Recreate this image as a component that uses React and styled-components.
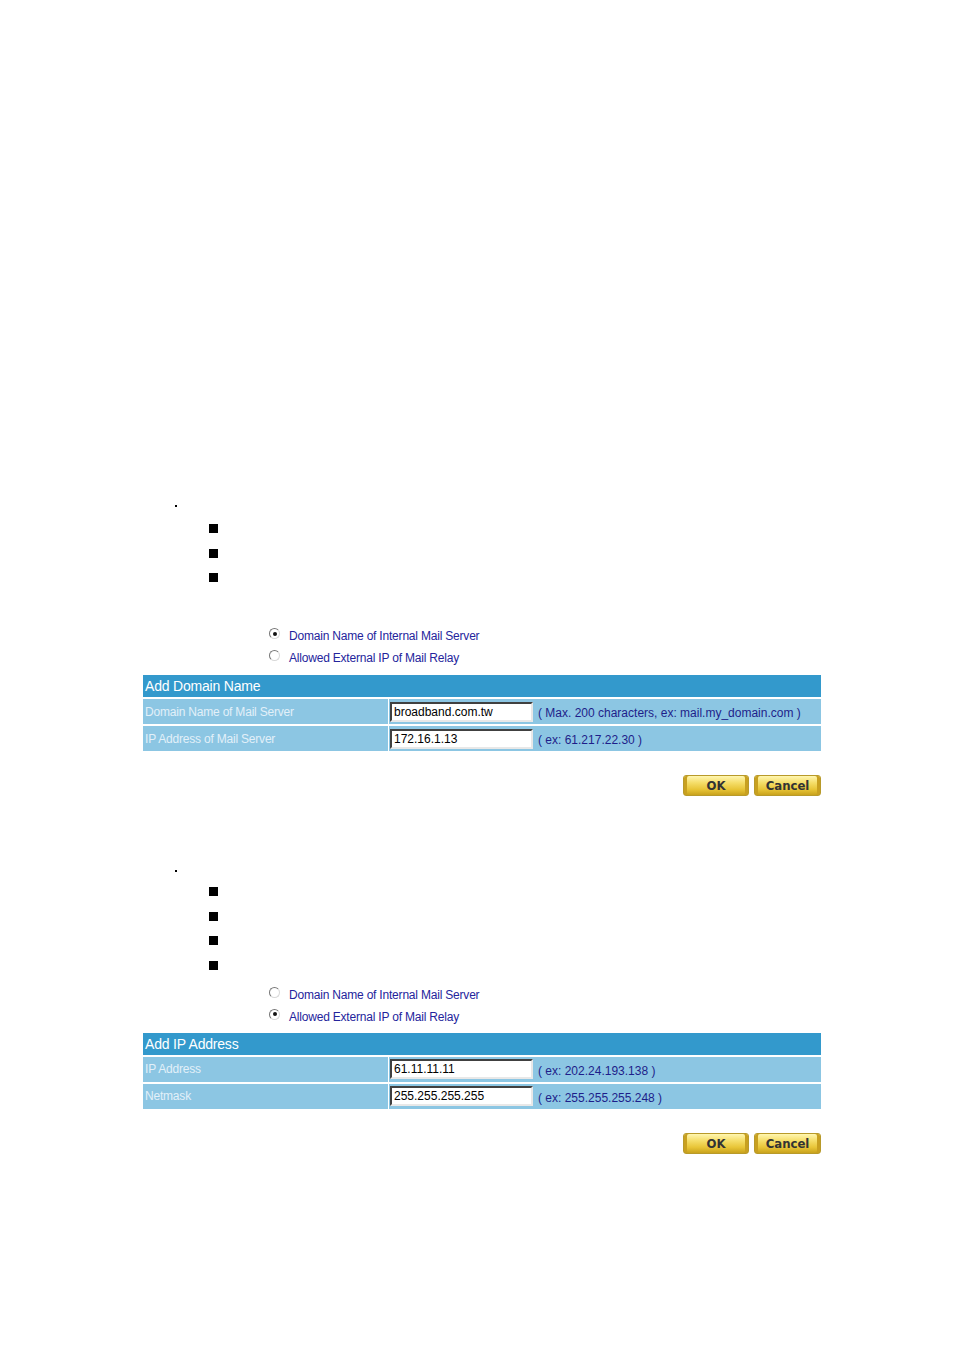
import styled, { createGlobalStyle } from 'styled-components';

const GlobalStyle = createGlobalStyle`
  html, body {
    margin: 0;
    padding: 0;
    background: #fff;
  }
  body {
    font-family: 'Liberation Sans', Arial, sans-serif;
  }
`;

const sections = [
  {
    bullets: 3,
    checked: 0,
    title: 'Add Domain Name',
    rows: [
      { label: 'Domain Name of Mail Server', value: 'broadband.com.tw', hint: '( Max. 200 characters, ex: mail.my_domain.com )' },
      { label: 'IP Address of Mail Server', value: '172.16.1.13', hint: '( ex: 61.217.22.30 )' },
    ],
  },
  {
    bullets: 4,
    checked: 1,
    title: 'Add IP Address',
    rows: [
      { label: 'IP Address', value: '61.11.11.11', hint: '( ex: 202.24.193.138 )' },
      { label: 'Netmask', value: '255.255.255.255', hint: '( ex: 255.255.255.248 )' },
    ],
  },
];

const App = () => {
  return (
    <>
      <GlobalStyle />
      <Page>
        {sections.map((s, i) => {
          const first = i === 0;
          return (
            <Section key={s.title} $first={first}>
              <Dot />
              <BulletList $first={first}>
                {Array.from({ length: s.bullets }).map((_, b) => (
                  <Square key={b} />
                ))}
              </BulletList>
              <RadioGroup $first={first}>
                <RadioRow>
                  <Radio $on={s.checked === 0} />
                  <RadioLabel>Domain Name of Internal Mail Server</RadioLabel>
                </RadioRow>
                <RadioRow>
                  <Radio $on={s.checked === 1} />
                  <RadioLabel>Allowed External IP of Mail Relay</RadioLabel>
                </RadioRow>
              </RadioGroup>
              <Table $first={first}>
                <Header>{s.title}</Header>
                {s.rows.map((r) => (
                  <Row key={r.label}>
                    <Label>{r.label}</Label>
                    <InputCell>
                      <Field defaultValue={r.value} />
                    </InputCell>
                    <Hint>{r.hint}</Hint>
                  </Row>
                ))}
              </Table>
              <Buttons>
                <GoldButton $w={66}>OK</GoldButton>
                <GoldButton $w={67}>Cancel</GoldButton>
              </Buttons>
            </Section>
          );
        })}
      </Page>
    </>
  );
};

export default App;

const Page = styled.div`
  width: 954px;
  height: 1350px;
  box-sizing: border-box;
  padding: 0 0 0 143px;
`;

const Section = styled.div`
  width: 678px;
  padding-top: ${(p) => (p.$first ? '505px' : '74px')};
`;

const Dot = styled.div`
  width: 2px;
  height: 2px;
  margin-left: 32px;
  background: #000;
`;

const BulletList = styled.div`
  display: flex;
  flex-direction: column;
  gap: 15.5px;
  margin: ${(p) => (p.$first ? '17px' : '15px')} 0 0 66px;
`;

const Square = styled.div`
  width: 9px;
  height: 9px;
  background: #000;
`;

const RadioGroup = styled.div`
  display: flex;
  flex-direction: column;
  gap: 10px;
  margin: ${(p) => (p.$first ? '48px' : '19px')} 0 0 126px;
`;

const RadioRow = styled.div`
  display: flex;
  align-items: center;
  height: 12px;
`;

const Radio = styled.span`
  position: relative;
  width: 9px;
  height: 9px;
  border-radius: 50%;
  border: 1px solid #777;
  border-right-color: #d8d8d8;
  border-bottom-color: #d8d8d8;
  background: #fff;
  margin-right: 9px;
  margin-top: -5px;
  &::after {
    content: '';
    display: ${(p) => (p.$on ? 'block' : 'none')};
    position: absolute;
    left: 2.5px;
    top: 2.5px;
    width: 4px;
    height: 4px;
    border-radius: 50%;
    background: #111;
  }
`;

const RadioLabel = styled.span`
  font-size: 12px;
  color: #24249c;
  letter-spacing: -0.2px;
`;

const Table = styled.div`
  margin-top: ${(p) => (p.$first ? '11px' : '10px')};
  display: flex;
  flex-direction: column;
`;

const Header = styled.div`
  height: 22px;
  line-height: 22px;
  background: #3399cc;
  color: #fff;
  font-size: 14px;
  letter-spacing: -0.2px;
  padding-left: 2px;
`;

const Row = styled.div`
  display: grid;
  grid-template-columns: 246px 147px 1fr;
  grid-template-rows: 25px;
  height: 25px;
  margin-top: 2px;
  overflow: hidden;
`;

const Cell = styled.div`
  background: #8cc6e3;
  display: flex;
  align-items: center;
  font-size: 12px;
  white-space: nowrap;
  overflow: hidden;
`;

const Label = styled(Cell)`
  color: #e2f0f9;
  padding-left: 2px;
  letter-spacing: -0.2px;
  border-right: 1px solid #fff;
`;

const InputCell = styled(Cell)`
  padding-left: 1px;
`;

const Field = styled.input`
  width: 143px;
  height: 20px;
  box-sizing: border-box;
  border: 2px solid #fff;
  border-top-color: #404040;
  border-left-color: #404040;
  border-right-color: #e8e8e8;
  border-bottom-color: #e8e8e8;
  padding: 0 2px;
  font-family: 'Liberation Sans', Arial, sans-serif;
  font-size: 12px;
  color: #000;
  outline: none;
`;

const Hint = styled(Cell)`
  color: #1e1e8a;
  padding: 3px 0 0 2px;
`;

const Buttons = styled.div`
  display: flex;
  justify-content: flex-end;
  gap: 5px;
  margin-top: 24px;
`;

const GoldButton = styled.div`
  width: ${(p) => p.$w}px;
  height: 21px;
  box-sizing: border-box;
  border-radius: 3px;
  border: 1px solid #b89a2a;
  background: linear-gradient(#fff6b0 0%, #f5de6a 35%, #e8c537 70%, #c9a21c 100%);
  box-shadow: inset 3px 0 0 #c8a020, inset -3px 0 0 #c8a020;
  color: #333;
  font-family: 'DejaVu Sans Condensed', 'DejaVu Sans', sans-serif;
  font-weight: bold;
  font-size: 13px;
  line-height: 19px;
  text-align: center;
`;
